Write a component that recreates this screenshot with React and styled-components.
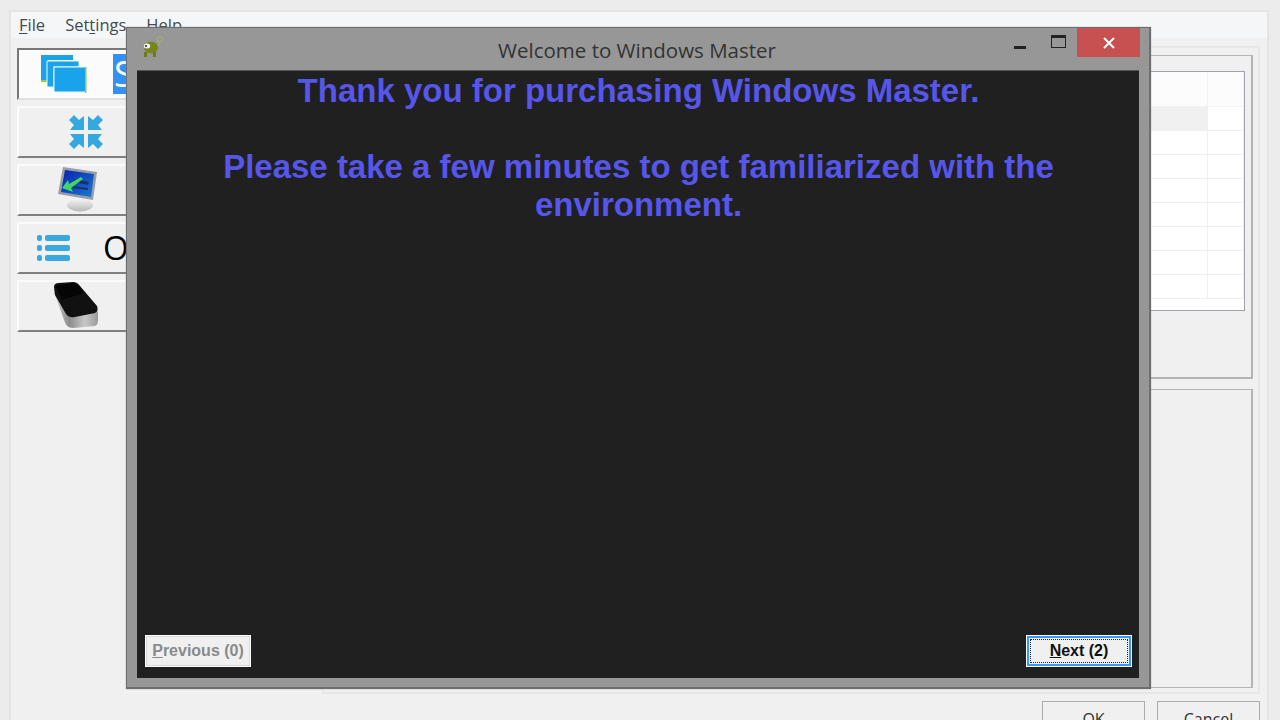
import React from "react";
import styled, { createGlobalStyle } from "styled-components";

const Global = createGlobalStyle`
  html, body {
    margin: 0;
    padding: 0;
    width: 1280px;
    height: 720px;
    overflow: hidden;
    background: #ececec;
  }
`;

const Page = styled.div`
  position: relative;
  width: 1280px;
  height: 720px;
  overflow: hidden;
  box-sizing: border-box;
  padding: 10px 11px 0 9px;
`;

// Main window behind the dialog
const MainWindow = styled.div`
  height: 730px;
  box-sizing: border-box;
  border: 2px solid #e4e4e4;
  border-bottom: none;
  background: #f0f0f0;
  display: flex;
  flex-direction: column;
`;

const MenuBar = styled.div`
  height: 26px;
  flex: none;
  background: #f5f6f7;
  border-bottom: 1px solid #f0f0f0;
  display: flex;
  gap: 20px;
  padding-left: 8px;
  align-items: center;
  font: 16.5px/26px "Open Sans", sans-serif;
  color: #444a50;
`;

const MenuItem = styled.span`
  u {
    text-underline-offset: 2px;
  }
`;

const Body = styled.div`
  display: flex;
  flex: 1;
  padding: 8px 7px 0 6px;
  gap: 10px;
`;

const Sidebar = styled.div`
  width: 295px;
  flex: none;
  display: flex;
  flex-direction: column;
  gap: 6px;
  padding-top: 1px;
`;

const SideButton = styled.div`
  height: 52px;
  box-sizing: border-box;
  display: flex;
  align-items: center;
  background: ${p => (p.$active ? "#fbfbfb" : "#f0f0f0")};
  border-style: solid;
  border-width: 2px;
  border-color: ${p =>
    p.$active
      ? "#777 #f6f6f6 #e0e0e0 #777"
      : "#fbfbfb #a0a0a0 #808080 #fbfbfb"};
  padding-left: ${p => p.$pad}px;
`;

const BlueLabel = styled.span`
  margin-left: 26px;
  width: 60px;
  height: 40px;
  background: #3390f4;
  color: #fff;
  font: 36px/40px "Open Sans", sans-serif;
  padding-left: 1px;
`;

const PlainLabel = styled.span`
  margin-left: 33px;
  font: 33px/40px "Open Sans", sans-serif;
  color: #000;
`;

const Content = styled.div`
  flex: 1;
  display: flex;
  flex-direction: column;
  margin-top: -1px;
`;

const ContentFrame = styled.div`
  height: 648px;
  box-sizing: border-box;
  border: 1px solid #dcdcdc;
  border-width: 2px 2px 2px 2px;
  border-color: #e6e6e6;
  padding: 7px 5px 4px 0;
  display: flex;
  flex-direction: column;
  gap: 10px;
`;

const TopGroup = styled.div`
  height: 324px;
  box-sizing: border-box;
  border: 1px solid #b4b4b4;
  border-right-width: 2px;
  border-bottom-width: 2px;
  padding: 15px 6px 0 60px;
`;

const BottomGroup = styled.div`
  flex: 1;
  border: 1px solid #b4b4b4;
  border-right-width: 2px;
`;

const Table = styled.div`
  height: 240px;
  box-sizing: border-box;
  background: #fff;
  border: 1px solid #a0a3ad;
  display: grid;
  grid-template-columns: 1fr 36px;
  grid-template-rows: 35px repeat(8, 24px);
`;

const Cell = styled.div`
  border-right: 1px solid ${p => (p.$head ? "#eef3fa" : "#efefef")};
  border-bottom: 1px solid ${p => (p.$head ? "#eef3fa" : "#efefef")};
  background: ${p => (p.$head ? "#fcfcfc" : p.$shade ? "#f0f0f0" : "#fff")};
`;

const Footer = styled.div`
  display: flex;
  justify-content: flex-end;
  gap: 12px;
  padding: 7px 0 0;
`;

const FooterButton = styled.div`
  width: 103px;
  height: 40px;
  box-sizing: border-box;
  border: 1px solid #acacac;
  background: #f0f0f0;
  text-align: center;
  font: 16px/34px "Open Sans", sans-serif;
  color: #333;
`;

// The welcome dialog lying over the main window
const Dialog = styled.div`
  position: absolute;
  left: 126px;
  top: 27px;
  width: 1025px;
  height: 662px;
  box-sizing: border-box;
  background: #979797;
  border: 2px solid #6e6e6e;
  border-width: 1px 2px 2px 1px;
  box-shadow: 0 0 1px #888;
  display: flex;
  flex-direction: column;
`;

const TitleBar = styled.div`
  height: 42px;
  flex: none;
  display: flex;
  position: relative;
  padding-left: 13px;
`;

const TitleText = styled.div`
  position: absolute;
  left: 0;
  right: 2px;
  top: 7px;
  text-align: center;
  font: 20.5px/30px "Open Sans", sans-serif;
  color: #333;
`;

const WinButtons = styled.div`
  margin-left: auto;
  margin-right: 9px;
  display: flex;
  align-items: flex-start;
`;

const WinButton = styled.div`
  width: ${p => p.$w}px;
  height: 29px;
  background: ${p => (p.$close ? "#c75050" : "transparent")};
  display: flex;
  align-items: center;
  justify-content: center;
`;

const ClientArea = styled.div`
  flex: 1;
  margin: 0 10px 9px 10px;
  background: #202020;
  border-top: 1px solid #555;
  display: flex;
  flex-direction: column;
  justify-content: space-between;
  padding: 0 7px 11px 8px;
`;

const Message = styled.div`
  text-align: center;
  font: bold 33px/38px "Liberation Sans", Arial, sans-serif;
  color: #5656ea;
  padding: 1px 62px 0;
`;

const NavRow = styled.div`
  display: flex;
  justify-content: space-between;
`;

const NavButton = styled.div`
  position: relative;
  width: 106px;
  height: 32px;
  box-sizing: border-box;
  background: #f0f0f0;
  border: 1px solid #fff;
  outline: ${p => (p.$focus ? "none" : "1px solid #d8d8d8")};
  outline-offset: -2px;
  box-shadow: ${p => (p.$focus ? "inset 0 0 0 2px #3399ff" : "none")};
  text-align: center;
  font: bold 16px/30px "Liberation Sans", Arial, sans-serif;
  color: ${p => (p.$focus ? "#111" : "#8a8a8a")};
  &::after {
    content: "";
    display: ${p => (p.$focus ? "block" : "none")};
    position: absolute;
    inset: 3px;
    border: 1px dotted #222;
  }
`;

const FlagIcon = () => (
  <svg width="24" height="24" viewBox="0 0 24 24" style={{ marginTop: 8 }}>
    <circle cx="20" cy="3.5" r="2.6" fill="none" stroke="#a9b56a" strokeWidth="1" />
    <path d="M20 6 Q19 11 15 11" fill="none" stroke="#a9b56a" strokeWidth="1" />
    <ellipse cx="11" cy="11.5" rx="7" ry="6" fill="#77861a" />
    <ellipse cx="7" cy="10" rx="3.2" ry="2.5" fill="#f2f2f2" />
    <circle cx="6" cy="10" r="1" fill="#222" />
    <rect x="4" y="16" width="3" height="5" fill="#6d7c18" />
    <rect x="13" y="16" width="3" height="5" fill="#6d7c18" />
  </svg>
);

const WindowsIcon = () => (
  <svg width="46" height="38" viewBox="0 0 46 38">
    <path d="M0 0h32v5H7v22H0z" fill="#19a3ea" />
    <rect x="0" y="25" width="7" height="2" fill="#8fd42c" />
    <path d="M6 6h32v6H13v20H6z" fill="#19a3ea" stroke="#eef8ff" strokeWidth="1" />
    <rect x="13" y="12" width="32" height="25" fill="#19a3ea" stroke="#eef8ff" strokeWidth="1" />
    <rect x="44" y="12" width="1.5" height="26" fill="#8fd42c" />
  </svg>
);

const CompressIcon = () => (
  <svg width="34" height="34" viewBox="0 0 34 34" fill="#35a8de">
    <path d="M0 5 L5 0 L10 5 L15 1 V15 H1 L5 10 Z" />
    <path d="M34 5 L29 0 L24 5 L19 1 V15 H33 L29 10 Z" />
    <path d="M0 29 L5 34 L10 29 L15 33 V19 H1 L5 24 Z" />
    <path d="M34 29 L29 34 L24 29 L19 33 V19 H33 L29 24 Z" />
  </svg>
);

const MonitorIcon = () => (
  <svg width="42" height="46" viewBox="0 0 42 46">
    <defs>
      <linearGradient id="scr" x1="0" y1="0" x2="1" y2="1">
        <stop offset="0" stopColor="#0a1fb0" />
        <stop offset="1" stopColor="#1a7bd0" />
      </linearGradient>
      <linearGradient id="stand" x1="0" y1="0" x2="0" y2="1">
        <stop offset="0" stopColor="#f4f4f4" />
        <stop offset="1" stopColor="#b8b8b8" />
      </linearGradient>
    </defs>
    <ellipse cx="23" cy="38" rx="13" ry="6.5" fill="url(#stand)" />
    <path d="M6 0 L40 5 L36 33 L1 27 Z" fill="#9a9ea6" />
    <path d="M8 3 L37 7 L34 30 L4 25 Z" fill="url(#scr)" />
    <path d="M17 12 L32 15 L31 18 L16 15 Z M15 19 L31 21 L31 23 L15 21 Z" fill="#1c2f6a" />
    <path d="M5 21 L11 13 L12 17 L24 10 L26 12 L14 21 L16 25 Z" fill="#3fd66a" />
  </svg>
);

const ListIcon = () => (
  <svg width="33" height="27" viewBox="0 0 33 27" fill="#37a9de">
    <rect x="0" y="0" width="5" height="6" rx="2" />
    <rect x="8" y="0" width="25" height="6" rx="2" />
    <rect x="0" y="10" width="5" height="6" rx="2" />
    <rect x="8" y="10" width="25" height="6" rx="2" />
    <rect x="0" y="20" width="5" height="6" rx="2" />
    <rect x="8" y="20" width="25" height="6" rx="2" />
  </svg>
);

const DriveIcon = () => (
  <svg width="46" height="48" viewBox="0 0 46 48">
    <defs>
      <linearGradient id="metal" x1="0" y1="0" x2="1" y2="0">
        <stop offset="0" stopColor="#d0d0d0" />
        <stop offset="0.35" stopColor="#8c8c8c" />
        <stop offset="0.7" stopColor="#c8c8c8" />
        <stop offset="1" stopColor="#9a9a9a" />
      </linearGradient>
    </defs>
    <path d="M1 10 L11 38 Q13 46 20 46 L42 44 Q45 43 45 38 L45 30 L20 5 Z" fill="url(#metal)" />
    <path d="M1 5 Q1 1 6 1 L20 0 Q24 0 27 4 L44 24 Q46 29 42 31 L22 35 Q16 36 13 32 L2 13 Z" fill="#111" />
    <path d="M3 4 L21 1 Q24 1 26 4 L31 11 L9 18 Z" fill="#050505" />
  </svg>
);

const tableRows = [0, 1, 2, 3, 4, 5, 6, 7];

export default function App() {
  return (
    <Page>
      <Global />
      <MainWindow>
        <MenuBar>
          <MenuItem><u>F</u>ile</MenuItem>
          <MenuItem>Set<u>t</u>ings</MenuItem>
          <MenuItem><u>H</u>elp</MenuItem>
        </MenuBar>
        <Body>
          <Sidebar>
            <SideButton $active $pad={22}>
              <WindowsIcon />
              <BlueLabel>S</BlueLabel>
            </SideButton>
            <SideButton $pad={50}><CompressIcon /></SideButton>
            <SideButton $pad={38}><MonitorIcon /></SideButton>
            <SideButton $pad={18}>
              <ListIcon />
              <PlainLabel>O</PlainLabel>
            </SideButton>
            <SideButton $pad={34}><DriveIcon /></SideButton>
          </Sidebar>
          <Content>
            <ContentFrame>
              <TopGroup>
                <Table>
                  {[...Array(2)].map((_, i) => <Cell key={i} $head />)}
                  {tableRows.map(r => (
                    <React.Fragment key={r}>
                      <Cell $shade={r === 0} />
                      <Cell />
                    </React.Fragment>
                  ))}
                </Table>
              </TopGroup>
              <BottomGroup />
            </ContentFrame>
            <Footer>
              <FooterButton>OK</FooterButton>
              <FooterButton>Cancel</FooterButton>
            </Footer>
          </Content>
        </Body>
      </MainWindow>

      <Dialog>
        <TitleBar>
          <FlagIcon />
          <TitleText>Welcome to Windows Master</TitleText>
          <WinButtons>
            <WinButton $w={38}>
              <svg width="12" height="12" viewBox="0 0 12 12">
                <rect x="0" y="9" width="12" height="3" fill="#222" />
              </svg>
            </WinButton>
            <WinButton $w={38}>
              <svg width="15" height="13" viewBox="0 0 15 13" style={{ marginBottom: 2 }}>
                <rect x="0.5" y="1" width="14" height="11.5" fill="none" stroke="#222" strokeWidth="1" />
                <rect x="0" y="0" width="15" height="3" fill="#222" />
              </svg>
            </WinButton>
            <WinButton $w={63} $close>
              <svg width="12" height="12" viewBox="0 0 12 12">
                <path d="M1 1 L11 11 M11 1 L1 11" stroke="#fff" strokeWidth="2" />
              </svg>
            </WinButton>
          </WinButtons>
        </TitleBar>
        <ClientArea>
          <Message>
            Thank you for purchasing Windows Master.
            <br />
            <br />
            Please take a few minutes to get familiarized with the environment.
          </Message>
          <NavRow>
            <NavButton><u>P</u>revious (0)</NavButton>
            <NavButton $focus><u>N</u>ext (2)</NavButton>
          </NavRow>
        </ClientArea>
      </Dialog>
    </Page>
  );
}
